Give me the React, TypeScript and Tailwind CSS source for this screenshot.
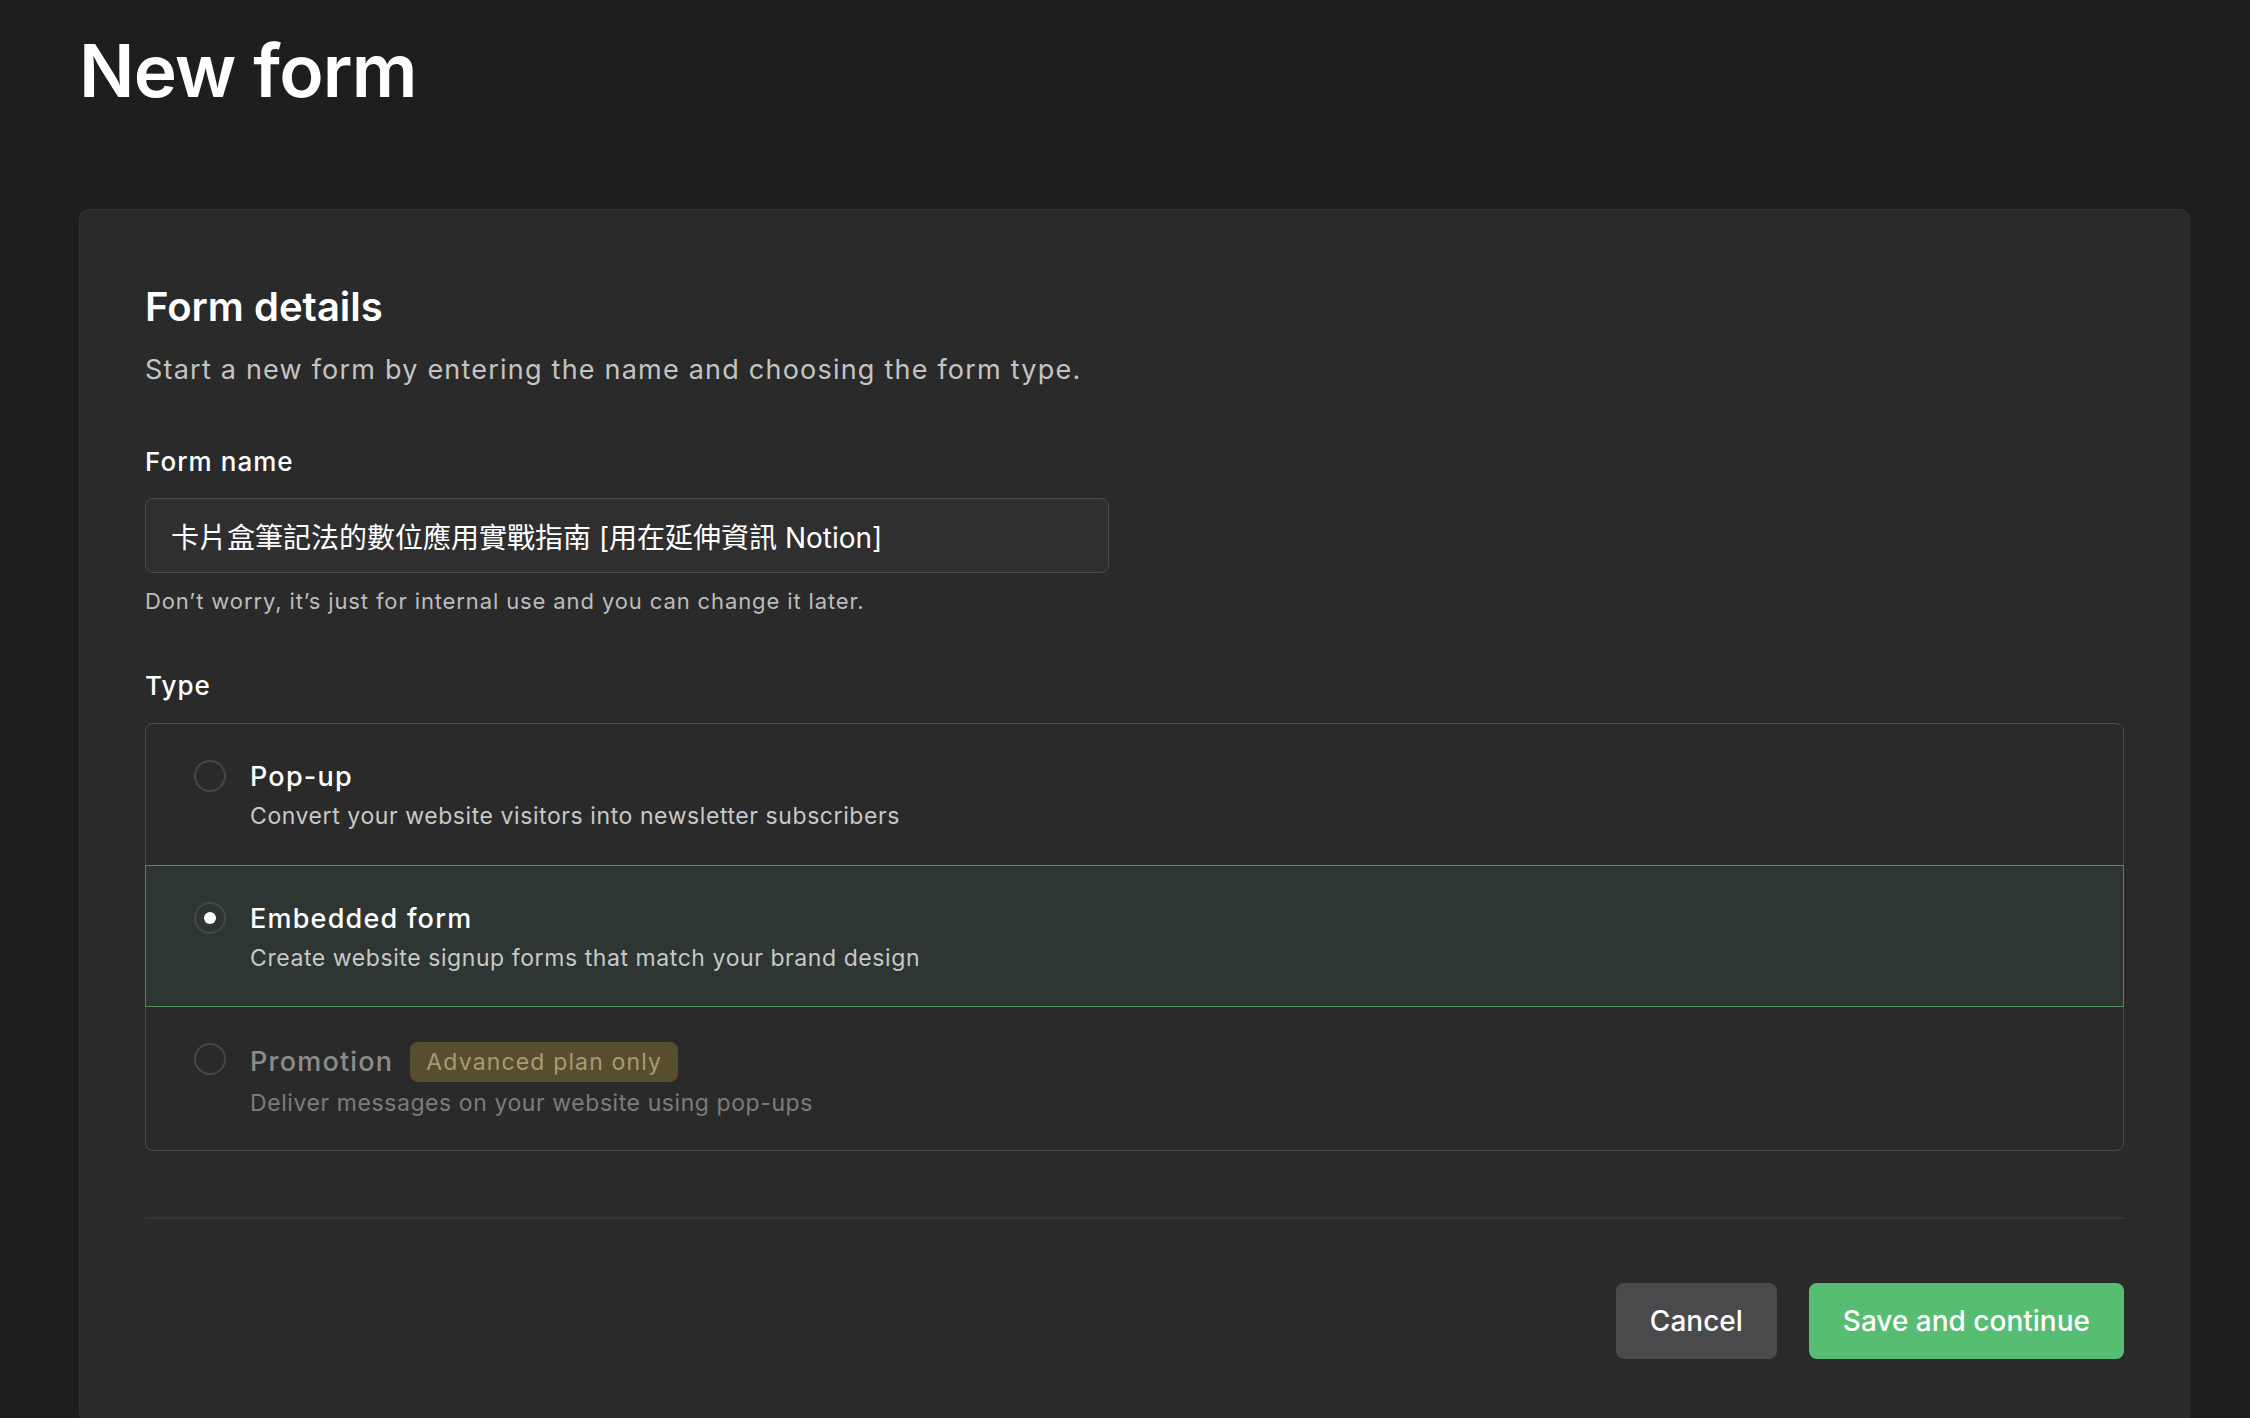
import React, { useState } from "react";

type FormType = "popup" | "embedded" | "promotion";

interface TypeOption {
  id: FormType;
  title: string;
  description: string;
  disabled?: boolean;
  badge?: string;
}

const options: TypeOption[] = [
  { id: "popup", title: "Pop-up", description: "Convert your website visitors into newsletter subscribers" },
  { id: "embedded", title: "Embedded form", description: "Create website signup forms that match your brand design" },
  {
    id: "promotion",
    title: "Promotion",
    description: "Deliver messages on your website using pop-ups",
    disabled: true,
    badge: "Advanced plan only",
  },
];

const Radio = ({ checked }: { checked: boolean }) => (
  <span className="mt-[1px] flex h-8 w-8 shrink-0 items-center justify-center rounded-full border-2 border-[#474747]">
    {checked && <span className="h-3 w-3 rounded-full bg-white" />}
  </span>
);

const App: React.FC = () => {
  const [name, setName] = useState("卡片盒筆記法的數位應用實戰指南 [用在延伸資訊 Notion]");
  const [type, setType] = useState<FormType>("embedded");

  return (
    <div className="min-h-screen bg-[#1e1e1e] pt-[34px] pl-[79px] pr-[60px] font-['Inter','Noto_Sans_CJK_TC',sans-serif] text-white">
      <h1 className="text-[73px] font-semibold leading-[74px] tracking-[-0.01em]">New form</h1>

      {/* CARD */}
      <div className="mt-[101px] rounded-[10px] border border-[#333333] bg-[#2a2a2a] px-[65px] pt-[73px] pb-[64px]">
        <h2 className="text-[40px] font-semibold leading-[48px]">Form details</h2>
        <p className="mt-[19px] text-[27px] leading-[40px] tracking-[0.045em] text-[#c4c4c4]">
          Start a new form by entering the name and choosing the form type.
        </p>

        {/* FORM NAME */}
        <label className="mt-[54px] block text-[26px] font-medium leading-[36px] tracking-[0.04em]">Form name</label>
        <input
          value={name}
          onChange={(e) => setName(e.target.value)}
          className="mt-[18px] block h-[75px] w-[964px] rounded-[8px] border border-[#4a4a4a] bg-[#2f2f2f] px-[25px] text-[28px] text-white outline-none"
        />
        <p className="mt-[12px] text-[22px] leading-[32px] tracking-[0.04em] text-[#bdbdbd]">
          Don’t worry, it’s just for internal use and you can change it later.
        </p>

        {/* TYPE */}
        <div className="mt-[51px] text-[26px] font-medium leading-[36px] tracking-[0.04em]">Type</div>
        <div className="mt-[19px] rounded-[8px] border border-[#4a4a4a]">
          {options.map((opt, i) => {
            const selected = type === opt.id;
            return (
              <div
                key={opt.id}
                onClick={() => !opt.disabled && setType(opt.id)}
                className={
                  selected
                    ? "-mx-px flex h-[142px] cursor-pointer items-start gap-[24px] border border-[#4d8a5d] bg-[#2d3632] pl-[48px] pt-[35px]"
                    : i === 0
                    ? "flex h-[141px] cursor-pointer items-start gap-[24px] pl-[48px] pt-[35px]"
                    : "flex h-[143px] items-start gap-[24px] pl-[48px] pt-[35px]"
                }
              >
                <Radio checked={selected} />
                <div>
                  <div className="flex items-center">
                    <span
                      className={
                        opt.disabled
                          ? "text-[27px] font-medium leading-[36px] tracking-[0.045em] text-[#8c8c8c]"
                          : "text-[27px] font-medium leading-[36px] tracking-[0.045em] text-white"
                      }
                    >
                      {opt.title}
                    </span>
                    {opt.badge && (
                      <span className="ml-[17px] flex h-[40px] items-center rounded-[8px] bg-[#594d30] px-[16px] text-[23px] tracking-[0.05em] text-[#a49c77]">
                        {opt.badge}
                      </span>
                    )}
                  </div>
                  <p
                    className={
                      opt.disabled
                        ? "mt-[5px] text-[23px] leading-[32px] tracking-[0.025em] text-[#7c7c7c]"
                        : "mt-[5px] text-[23px] leading-[32px] tracking-[0.025em] text-[#c8c8c8]"
                    }
                  >
                    {opt.description}
                  </p>
                </div>
              </div>
            );
          })}
        </div>

        <div className="mt-[66px] h-[2px] bg-[#353535]" />

        {/* BUTTONS */}
        <div className="mt-[64px] flex justify-end gap-[32px]">
          <button className="h-[76px] rounded-[8px] bg-[#4a4a4c] px-[34px] text-[28px] font-medium text-white">
            Cancel
          </button>
          <button className="h-[76px] rounded-[8px] bg-[#57bd72] px-[34px] text-[28px] font-medium text-white">
            Save and continue
          </button>
        </div>
      </div>
    </div>
  );
};

export default App;
